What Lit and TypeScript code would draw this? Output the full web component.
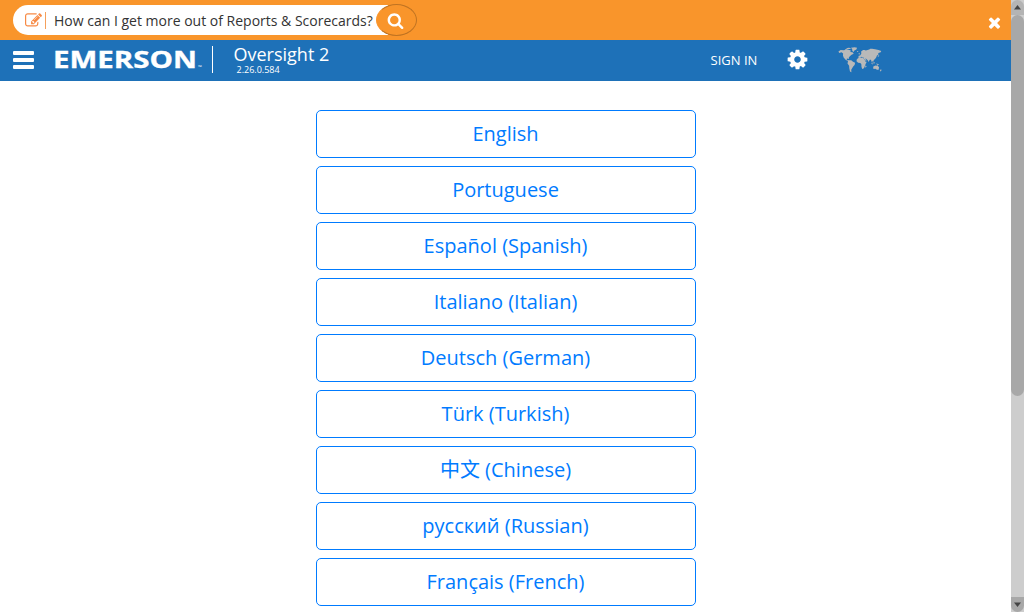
import { LitElement, html, css, svg } from 'lit';
import { customElement } from 'lit/decorators.js';

const ICONS = {
  search: 'M1216 832q0-185-131.5-316.5t-316.5-131.5-316.5 131.5-131.5 316.5 131.5 316.5 316.5 131.5 316.5-131.5 131.5-316.5zm512 832q0 52-38 90t-90 38q-54 0-90-38l-343-342q-179 124-399 124-143 0-273.5-55.5t-225-150-150-225-55.5-273.5 55.5-273.5 150-225 225-150 273.5-55.5 273.5 55.5 225 150 150 225 55.5 273.5q0 220-124 399l343 343q37 37 37 90z',
  cog: 'M1152 896q0-106-75-181t-181-75-181 75-75 181 75 181 181 75 181-75 75-181zm512-109v222q0 12-8 23t-20 13l-185 28q-19 54-39 91 35 50 107 138 10 12 10 25t-9 23q-27 37-99 108t-94 71q-12 0-26-9l-138-108q-44 23-91 38-16 136-29 186-7 28-36 28h-222q-14 0-24.5-8.5t-11.5-21.5l-28-184q-49-16-90-37l-141 107q-10 9-25 9-14 0-25-11-126-114-165-168-7-10-7-23 0-12 8-23 15-21 51-66.5t54-70.5q-27-50-41-99l-183-27q-13-2-21-12.5t-8-23.5v-222q0-12 8-23t19-13l186-28q14-46 39-92-40-57-107-138-10-12-10-24 0-10 9-23 26-36 98.5-107.5t94.5-71.5q13 0 26 10l138 107q44-23 91-38 16-136 29-186 7-28 36-28h222q14 0 24.5 8.5t11.5 21.5l28 184q49 16 90 37l142-107q9-9 24-9 13 0 25 10 129 119 165 170 7 8 7 22 0 12-8 23-15 21-51 66.5t-54 70.5q26 50 41 98l183 28q13 2 21 12.5t8 23.5z',
  times: 'M1490 1322q0 40-28 68l-136 136q-28 28-68 28t-68-28l-294-294-294 294q-28 28-68 28t-68-28l-136-136q-28-28-28-68t28-68l294-294-294-294q-28-28-28-68t28-68l136-136q28-28 68-28t68 28l294 294 294-294q28-28 68-28t68 28l136 136q28 28 28 68t-28 68l-294 294 294 294q28 28 28 68z',
  edit: 'M888 1184l116-116-152-152-116 116v56h96v96h56zm440-720q-16-16-33 1l-350 350q-17 17-1 33t33-1l350-350q17-17 1-33zm80 594v190q0 119-84.5 203.5t-203.5 84.5h-832q-119 0-203.5-84.5t-84.5-203.5v-832q0-119 84.5-203.5t203.5-84.5h832q63 0 117 25 15 7 18 23 3 17-9 29l-49 49q-14 14-32 8-23-6-45-6h-832q-66 0-113 47t-47 113v832q0 66 47 113t113 47h832q66 0 113-47t47-113v-126q0-13 9-22l64-64q15-15 35-7t20 29zm-96-738l288 288-672 672h-288v-288zm444 132l-92 92-288-288 92-92q28-28 68-28t68 28l152 152q28 28 28 68t-28 68z',
};

const CONTINENTS = [
  'M0.5 5.5L3 3.6L7 4L9 2.6L12 3.4L14.5 4.2L14 6.2L16.5 6.6L17.8 8.4L15.4 9.6L13.4 11.4L12.2 13.2L12.6 14.8L11 14.2L9.6 14.8L10.6 16.4L12.4 17L11.4 17.4L8.6 15.8L6.4 13L5.6 10.4L5.8 8L4 6.4L1.4 7.4Z',
  'M9 1.6L12.4 1L15 1.4L13.4 2.6L10.6 2.6Z',
  'M14.6 1L18.8 0.4L21.6 0.8L20.8 3.2L18.6 4.4L17.4 6L16.2 4.6L16 2.6Z',
  'M11.4 16.2L15 16.4L17 18L19.4 19.4L18.8 22L17.2 24L16 26L15 28L15.2 31L13.6 30L12.8 26L12.6 23L10.8 20.4L11.2 18Z',
  'M21.4 5.4L22.8 5L22.9 6L21.6 6.2Z',
  'M23.4 7.8L24.2 7L24.8 9L23.6 9.2Z',
  'M22.8 12.8L23.6 10.8L25 10.4L26.4 8.2L26.2 5.6L28.4 3.8L30 3.6L31.6 4.4L33.4 3.6L35.4 3.2L36.6 2.2L38.6 2L42 2.8L46 3.6L49 5L48.4 6.6L45.8 7.4L45.4 9.4L44 10.8L43.4 12.6L42 14.8L40.6 16L40 18L38.6 17.2L39.2 19.6L37.8 17.6L37.4 15.8L36 15.6L34.8 18.4L33.4 16L31.8 14.6L30.6 14.4L32.6 16.4L31.2 17L29.2 14L29 13L27.4 12.8L26.8 12L25.6 12.6L24.8 13.4Z',
  'M22.6 13.8L25.2 12.8L28.6 13.4L30.2 15.6L31.2 18L32.6 18L31.4 20.6L30.6 23.2L29.4 26L27.4 27L26.6 24.4L26.4 21L25.2 19.6L22.8 19.4L21 17.6L21.2 15.4Z',
  'M31.6 22.6L32.2 24L31.4 25.4L30.8 24.4Z',
  'M37.4 19L39 20L39.8 21.4L38.4 21Z',
  'M40.2 18.8L41.4 18.4L41.4 20.4L40.2 20.4Z',
  'M43 20.4L45.6 21L46.6 22L44.4 21.8Z',
  'M39.8 24.4L42.2 22.8L43.4 23L44.8 22.6L46.6 25.2L45.8 28.2L43.6 27.8L42.4 26.8L40.2 27.2Z',
  'M46 9L46.8 10L45.6 12.2L44.8 12.4L45.8 10.8Z',
  'M48.4 27.4L49.6 28.4L48 30L47.4 29.6Z',
];

const LANGUAGES = [
  'English', 'Portuguese', 'Español (Spanish)', 'Italiano (Italian)', 'Deutsch (German)',
  'Türk (Turkish)', '中文 (Chinese)', 'русский (Russian)', 'Français (French)',
];

const icon = (name: keyof typeof ICONS, cls: string) =>
  html`<svg class="icon ${cls}" viewBox="0 0 1792 1792"><path d=${ICONS[name]}></path></svg>`;

@customElement('app-root')
export class AppRoot extends LitElement {
  static styles = css`
    :host { display: flex; width: 1024px; height: 612px; overflow: hidden; background: #fff;
      font-family: 'Open Sans', 'Noto Sans CJK SC', sans-serif; }
    * { box-sizing: border-box; }
    .icon { display: block; fill: currentColor; flex: none; }
    .page { width: 1011px; display: flex; flex-direction: column; }
    .guide { height: 40px; flex: none; background: #f9952b; display: flex; align-items: flex-start; padding: 4px 8px 0 13px; }
    .ask { display: flex; align-items: center; width: 375px; height: 30px; margin-top: 1px; padding-left: 11.5px;
      background: #fff; border-radius: 15px 0 0 15px; color: #333; font-size: 14px; white-space: nowrap; }
    .edit { width: 17px; height: 17px; color: #f78a45; }
    .bar { width: 1px; height: 17px; background: #f5a05c; margin: 0 8px 0 3.5px; }
    .go { width: 41px; height: 32px; margin-left: -12px; padding: 0 2px 0 0; border: 1.5px solid #bf7322; border-left-color: #f9952b;
      border-radius: 50%; background: #f9952b; color: #fff; display: flex; align-items: center; justify-content: center; }
    .search { width: 17px; height: 17px; }
    .times { width: 17px; height: 17px; margin: 10px 0 0 auto; color: #fff; }
    .nav { height: 41px; flex: none; background: #1e71b8; color: #fff; display: flex; align-items: flex-start; padding-left: 13px; }
    .menu { width: 21px; height: 18px; margin-top: 11px; display: flex; flex-direction: column; justify-content: space-between; }
    .line { height: 4px; border-radius: 1px; background: #fff; }
    .logo { display: block; width: 150px; height: 32px; margin: 4px 0 0 20px; fill: #fff; }
    .rule { width: 1px; height: 27px; margin: 6px 0 0 8px; background: #fff; }
    .product { width: 120px; margin-left: 20.5px; }
    .name { font-size: 18px; line-height: 24px; margin-top: 2px; }
    .version { font-size: 9px; line-height: 10px; margin: -1px 0 0 3px; }
    .sign { font-size: 13px; line-height: 20px; margin: 10px 0 0 357px; width: 50px; white-space: nowrap; }
    .cog { width: 23px; height: 23px; margin: 8px 0 0 25px; }
    .map { display: block; width: 45px; height: 26px; margin: 7px 0 0 29px; fill: #b9b9b9; }
    .list { width: 380px; margin: 29px 0 0 316px; display: flex; flex-direction: column; gap: 8px; }
    .lang { height: 48px; flex: none; border: 1px solid #007bff; border-radius: 5px; background: #fff; color: #007bff;
      font-family: inherit; font-size: 20px; font-weight: 400; line-height: 30px; padding: 8px 17px 8px 16px; text-align: center; }
    .scroll { width: 13px; height: 612px; background: #cdcdcd; display: flex; flex-direction: column; }
    .cap { height: 15px; flex: none; background: #a8a8a8; display: flex; justify-content: center; align-items: center; }
    .up { border-radius: 7px 7px 0 0; background: #b4b4b4; }
    .down { margin-top: auto; border-radius: 0 0 7px 7px; }
    .arrow { width: 7px; height: 5px; fill: #444; display: block; }
    .thumb { height: 381px; border-radius: 7px; background: #a8a8a8; }
  `;

  render() {
    return html`
      <div class="page">
        <div class="guide">
          <div class="ask">${icon('edit', 'edit')}<span class="bar"></span><span>How can I get more out of Reports &amp; Scorecards?</span></div>
          <button class="go" aria-label="Search">${icon('search', 'search')}</button>
          ${icon('times', 'times')}
        </div>
        <header class="nav">
          <div class="menu"><span class="line"></span><span class="line"></span><span class="line"></span></div>
          <svg class="logo" viewBox="0 0 150 32">
            <text x="-1" y="23.5" font-size="23" font-weight="700" stroke="#fff" stroke-width="0.35" textLength="144" lengthAdjust="spacingAndGlyphs">EMERSON</text>
            <text x="144" y="25" font-size="5">™</text>
          </svg>
          <span class="rule"></span>
          <div class="product"><div class="name">Oversight 2</div><div class="version">2.26.0.584</div></div>
          <span class="sign">SIGN IN</span>
          ${icon('cog', 'cog')}
          <svg class="map" viewBox="0 0 51 32" preserveAspectRatio="none">${CONTINENTS.map((d) => svg`<path d=${d}></path>`)}</svg>
        </header>
        <main class="list">${LANGUAGES.map((l) => html`<button class="lang">${l}</button>`)}</main>
      </div>
      <div class="scroll">
        <div class="cap up"><svg class="arrow" viewBox="0 0 7 5"><path d="M3.5 0L7 4.5H0z"></path></svg></div>
        <div class="thumb"></div>
        <div class="cap down"><svg class="arrow" viewBox="0 0 7 5"><path d="M3.5 5L7 .5H0z"></path></svg></div>
      </div>`;
  }
}
